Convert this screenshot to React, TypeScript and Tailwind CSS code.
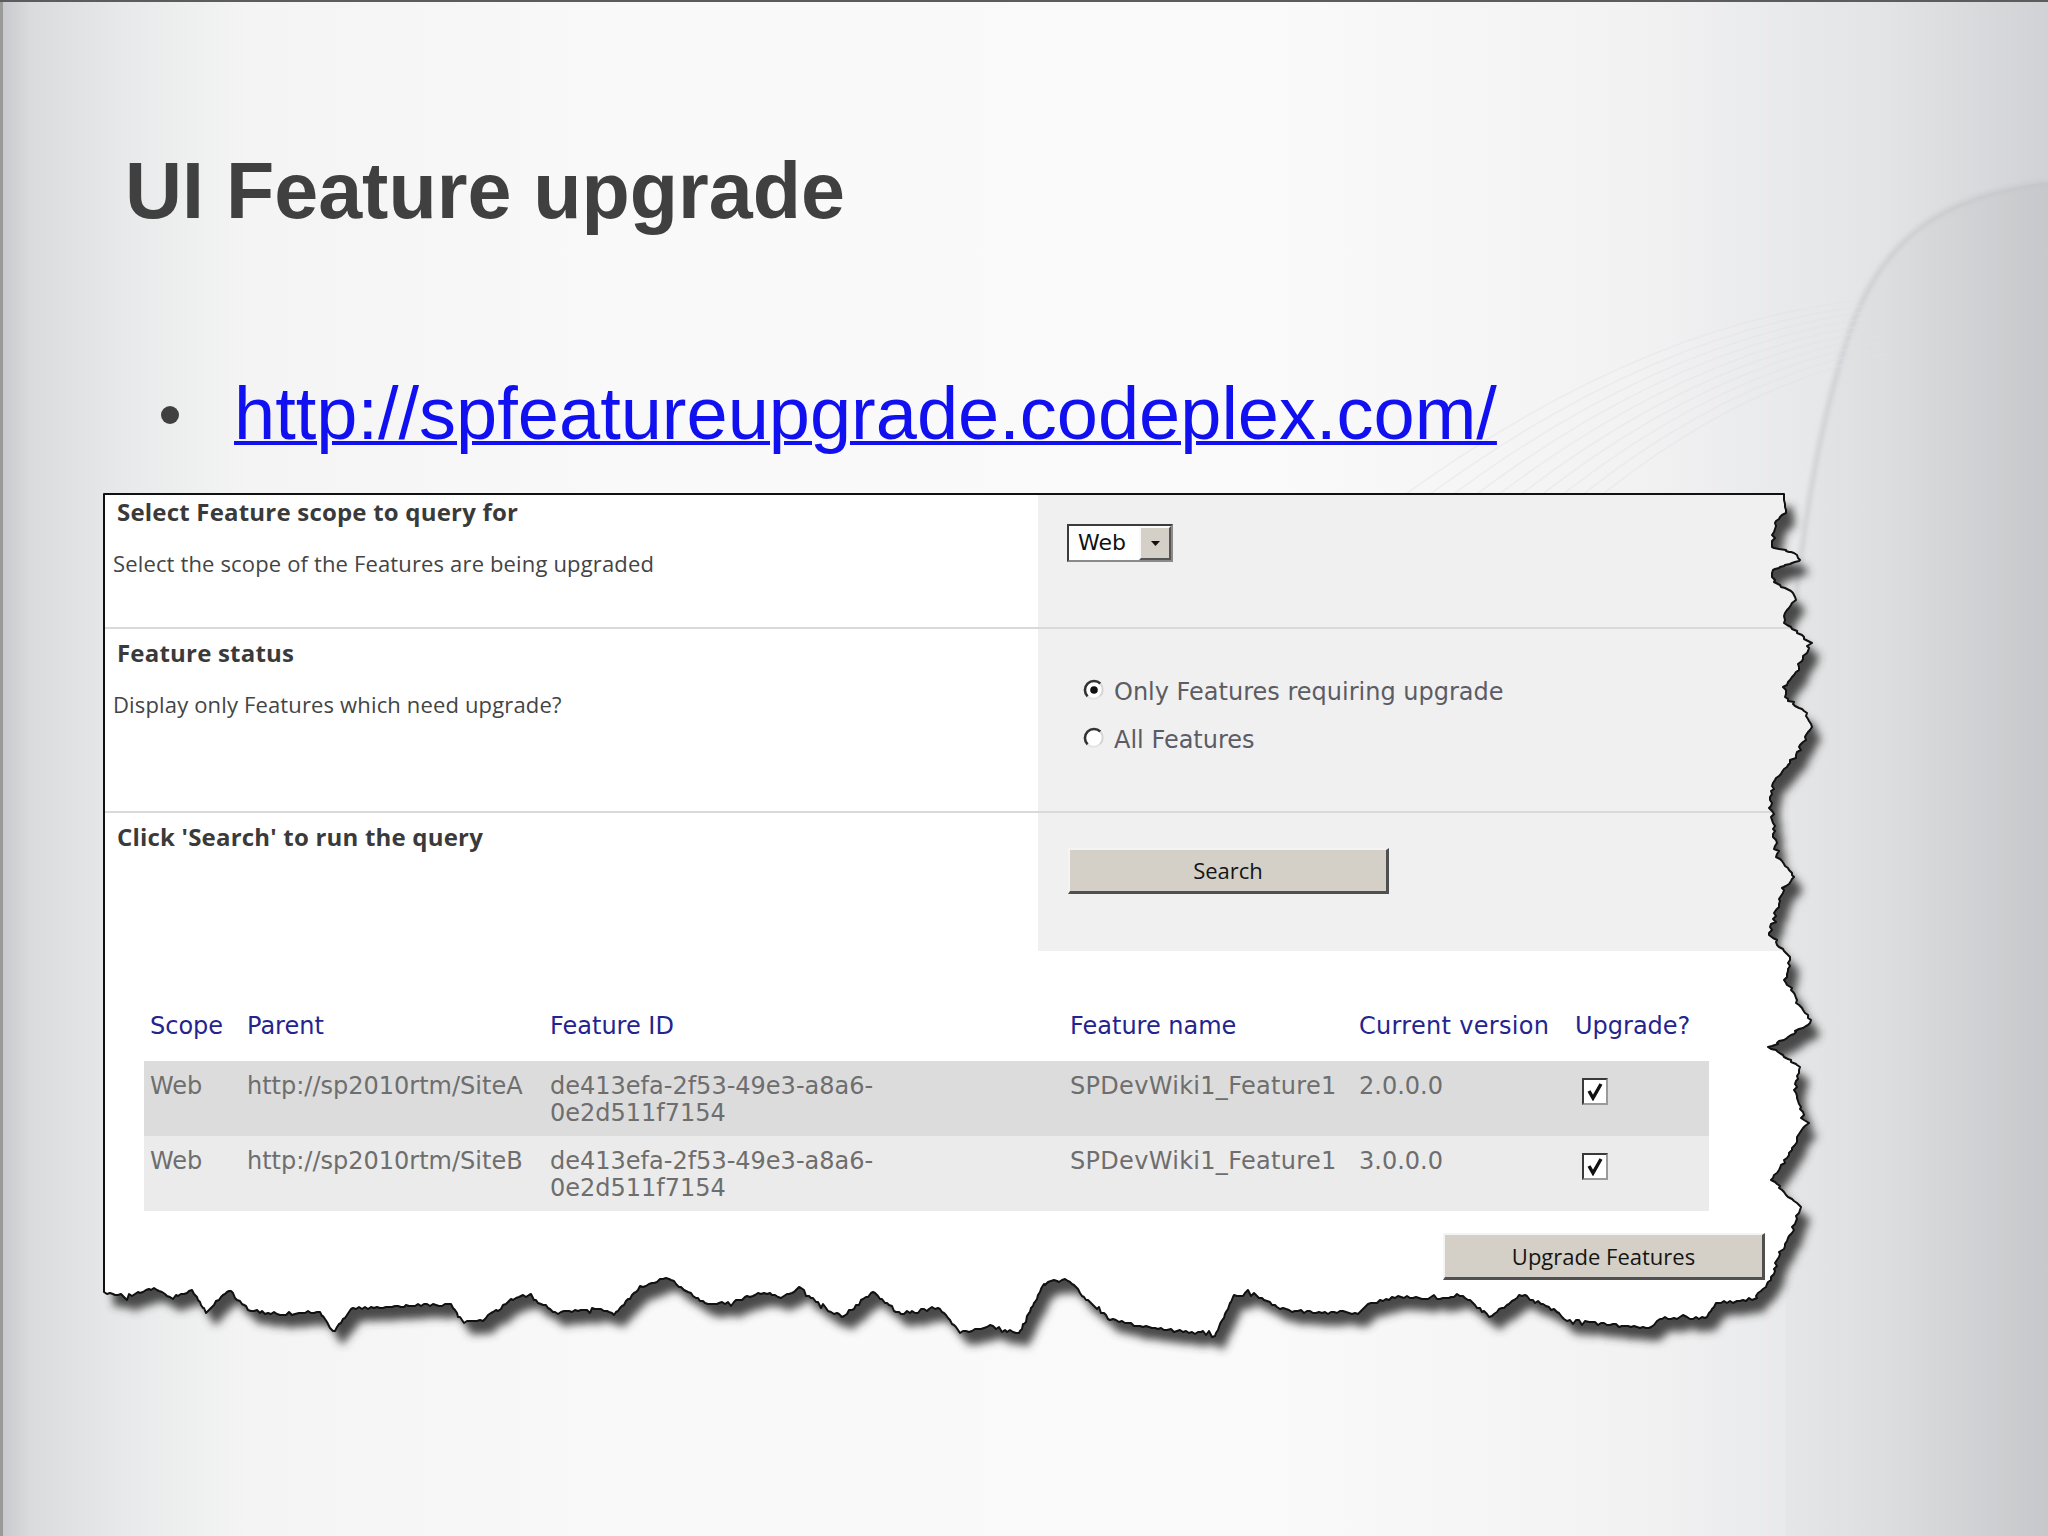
import React from "react";

const OX = 104;
const OY = 494;

const RIGHT: [number, number][] = [
  [1784, 494], [1785, 513], [1775, 523], [1772, 547], [1795, 553], [1800, 560], [1772, 570], [1772, 580],
  [1793, 593], [1795, 600], [1785, 613], [1785, 623], [1798, 633], [1811, 643], [1806, 653], [1800, 667],
  [1785, 687], [1785, 697], [1806, 713], [1811, 727], [1800, 747], [1790, 763], [1775, 780], [1770, 797],
  [1772, 817], [1775, 840], [1777, 857], [1795, 877], [1783, 890], [1777, 910], [1770, 933], [1780, 947],
  [1790, 957], [1785, 980], [1811, 1023], [1770, 1047], [1800, 1067], [1795, 1090], [1806, 1123], [1790, 1153],
  [1772, 1180], [1800, 1207], [1792, 1233], [1778, 1257], [1771, 1280], [1752, 1300],
];

const BOTTOM: [number, number][] = [
  [1718, 1302], [1705, 1318], [1665, 1318], [1646, 1328], [1607, 1325], [1567, 1320], [1554, 1310], [1522, 1295],
  [1489, 1317], [1463, 1295], [1437, 1298], [1398, 1297], [1371, 1303], [1358, 1313], [1319, 1312], [1280, 1310],
  [1254, 1293], [1234, 1295], [1215, 1335], [1189, 1332], [1149, 1328], [1110, 1320], [1084, 1297], [1068, 1280],
  [1045, 1282], [1019, 1333], [993, 1327], [960, 1332], [938, 1307], [901, 1315], [873, 1292], [842, 1317],
  [823, 1307], [799, 1287], [784, 1297], [758, 1293], [731, 1303], [705, 1303], [686, 1290], [666, 1278],
  [640, 1287], [614, 1315], [607, 1310], [575, 1310], [555, 1313], [529, 1295], [516, 1297], [483, 1320],
  [464, 1322], [451, 1305], [418, 1305], [392, 1307], [353, 1308], [333, 1332], [320, 1312], [274, 1315],
  [248, 1310], [229, 1290], [206, 1312], [192, 1290], [170, 1297], [154, 1288], [124, 1298], [104, 1292],
];

function mulberry32(seed: number) {
  let a = seed;
  return function () {
    a |= 0;
    a = (a + 0x6d2b79f5) | 0;
    let t = Math.imul(a ^ (a >>> 15), 1 | a);
    t = (t + Math.imul(t ^ (t >>> 7), 61 | t)) ^ t;
    return ((t ^ (t >>> 14)) >>> 0) / 4294967296;
  };
}

function buildEdge(): [number, number][] {
  const rnd = mulberry32(11);
  const pts: [number, number][] = [[0, 0]];
  const jag = (list: [number, number][], axis: "x" | "y") => {
    for (let i = 0; i < list.length - 1; i++) {
      const [x1, y1] = list[i];
      const [x2, y2] = list[i + 1];
      const len = Math.hypot(x2 - x1, y2 - y1);
      const n = Math.max(1, Math.round(len / 3));
      for (let k = 0; k < n; k++) {
        const t = k / n;
        let x = x1 + (x2 - x1) * t;
        let y = y1 + (y2 - y1) * t;
        const big = rnd() < 0.12 ? 2.2 : 1;
        const j = (rnd() - 0.5) * 3 * big;
        if (i > 0 || k > 0) {
          if (axis === "x") x += j;
          else y += j;
        }
        pts.push([Math.round(x - OX), Math.round(y - OY)]);
      }
    }
  };
  jag(RIGHT, "x");
  jag([RIGHT[RIGHT.length - 1], ...BOTTOM], "y");
  const last = BOTTOM[BOTTOM.length - 1];
  pts.push([0, last[1] - OY]);
  return pts;
}

const EDGE = buildEdge();
const CLIP = "polygon(" + EDGE.map(([x, y]) => `${x}px ${y}px`).join(", ") + ")";
const PATH = "M" + EDGE.map(([x, y]) => `${x} ${y}`).join(" L") + " Z";

function Radio({ checked }: { checked: boolean }) {
  return (
    <svg width="22" height="24" viewBox="0 0 22 24" className="shrink-0">
      <circle cx="11" cy="12" r="9" fill="#ffffff" />
      <path d="M16.9 18.1 A9 9 0 0 1 4.6 18.4" stroke="#e4e4e4" strokeWidth="2" fill="none" />
      <path d="M4.6 18.4 A9 9 0 0 1 17.4 5.6" stroke="#333333" strokeWidth="2.6" fill="none" />
      <path d="M17.4 5.6 A9 9 0 0 1 16.9 18.1" stroke="#d4d4d4" strokeWidth="2" fill="none" />
      {checked && <circle cx="11" cy="12" r="3.8" fill="#111111" />}
    </svg>
  );
}

function Checkbox() {
  return (
    <div className="w-[26px] h-[27px] bg-white border-2 border-t-[#3a3a3a] border-l-[#3a3a3a] border-b-[#9a9a9a] border-r-[#9a9a9a] flex items-center justify-center">
      <svg width="16" height="19" viewBox="0 0 16 19">
        <path d="M2 9 L6 16 L14 2" stroke="#111111" strokeWidth="3.4" fill="none" />
      </svg>
    </div>
  );
}

function WinButton({ label, w, h }: { label: string; w: string; h: string }) {
  return (
    <div
      className={`${w} ${h} bg-[#d4d0c8] border-t-2 border-l-2 border-t-[#f4f4f4] border-l-[#f4f4f4] border-b-[3px] border-r-[3px] border-b-[#505050] border-r-[#505050] flex items-center justify-center font-['Open_Sans',sans-serif] text-[22px] text-[#141414]`}
    >
      {label}
    </div>
  );
}

const ROWS = [
  { scope: "Web", parent: "http://sp2010rtm/SiteA", version: "2.0.0.0", bg: "bg-[#dcdcdc]" },
  { scope: "Web", parent: "http://sp2010rtm/SiteB", version: "3.0.0.0", bg: "bg-[#ebebeb]" },
];

export default function App() {
  return (
    <div className="relative w-[2048px] h-[1536px] overflow-hidden bg-[linear-gradient(90deg,#c6c8cb_0%,#d9dbdd_1.5%,#e8e9ea_6%,#f3f4f3_12%,#f8f9f8_30%,#fafafa_62%,#f2f2f3_80%,#e3e4e6_92%,#d0d2d5_100%)] shadow-[inset_0_2px_0_#5c5c5c,inset_3px_0_0_#9a9a9a]">
      {/* background swoosh drawing */}
      <svg className="absolute left-0 top-0" width="2048" height="1536" viewBox="0 0 2048 1536">
        <defs>
          <filter id="swBlur" x="-10%" y="-10%" width="120%" height="120%">
            <feGaussianBlur stdDeviation="2.5" />
          </filter>
          <linearGradient id="swFill" x1="0" y1="0" x2="1" y2="0">
            <stop offset="0" stopColor="#000000" stopOpacity="0.015" />
            <stop offset="1" stopColor="#000000" stopOpacity="0.05" />
          </linearGradient>
        </defs>
        <path
          d="M2048 182 C1945 195 1885 235 1852 325 C1822 410 1800 520 1786 700 L1786 1536 L2048 1536 Z"
          fill="url(#swFill)"
        />
        <path
          d="M2048 182 C1945 195 1885 235 1852 325 C1822 410 1800 520 1786 700"
          stroke="#c2c4c7"
          strokeWidth="3"
          fill="none"
          filter="url(#swBlur)"
        />
        {Array.from({ length: 10 }).map((_, i) => (
          <path
            key={i}
            d={`M${1320 + i * 14} ${560 + i * 10} Q${1600 + i * 6} ${330 + i * 8} ${1860 + i * 3} ${300 + i * 6}`}
            stroke="#e2e3e4"
            strokeWidth="1.5"
            strokeOpacity="0.45"
            fill="none"
          />
        ))}
      </svg>

      <div className="relative">
        <h1 className="pt-[151px] ml-[125px] font-['Liberation_Sans',Arial,sans-serif] text-[79px] leading-[80px] font-bold text-[#404040]">
          UI Feature upgrade
        </h1>

        <div className="flex items-start mt-[146px]">
          <div className="ml-[161px] mt-[29px] w-[18px] h-[18px] rounded-full bg-[#404040]" />
          <a
            href="#"
            className="ml-[55px] font-['Liberation_Sans',Arial,sans-serif] text-[74px] leading-[74px] text-[#1010f0] underline decoration-[4px]"
          >
            http://spfeatureupgrade.codeplex.com/
          </a>
        </div>

        {/* torn screenshot panel */}
        <div className="relative ml-[104px] mt-[43px] w-[1716px] h-[852px]">
          <svg className="absolute left-0 top-0 overflow-visible" width="1760" height="900">
            <defs>
              <filter id="tornShadow" x="-5%" y="-5%" width="110%" height="110%">
                <feGaussianBlur stdDeviation="4.5" />
              </filter>
            </defs>
            <path d={PATH} transform="translate(9 13)" fill="#3a3a3a" fillOpacity="0.92" filter="url(#tornShadow)" />
          </svg>

          <div className="relative w-full h-full bg-white" style={{ clipPath: CLIP }}>
            {/* Row 1 */}
            <div className="flex h-[133px]">
              <div className="w-[934px] pl-[13px] pt-[3px] font-['Open_Sans',sans-serif]">
                <div className="text-[24px] leading-[30px] font-bold tracking-[0.2px] text-[#3a3a3a]">Select Feature scope to query for</div>
                <div className="mt-[22px] -ml-[4px] text-[22px] leading-[28px] tracking-[0.15px] text-[#444444]">
                  Select the scope of the Features are being upgraded
                </div>
              </div>
              <div className="flex-1 bg-[#f0f0f1] pl-[29px] pt-[30px]">
                <div className="w-[106px] h-[38px] flex bg-white border-2 border-t-[#3c3c3c] border-l-[#3c3c3c] border-b-[#8a8a8a] border-r-[#8a8a8a]">
                  <div className="flex-1 pl-[9px] font-['DejaVu_Sans',sans-serif] text-[22px] leading-[34px] text-[#111111]">Web</div>
                  <div className="w-[32px] h-full bg-[#d4d0c8] border-t-2 border-l-2 border-t-[#fafafa] border-l-[#fafafa] border-b-2 border-r-2 border-b-[#555555] border-r-[#555555] flex items-center justify-center">
                    <svg width="9" height="5" viewBox="0 0 9 5">
                      <path d="M0 0 H9 L4.5 5 Z" fill="#111111" />
                    </svg>
                  </div>
                </div>
              </div>
            </div>
            <div className="h-[2px] bg-[#d9d9da]" />

            {/* Row 2 */}
            <div className="flex h-[182px]">
              <div className="w-[934px] pl-[13px] pt-[9px] font-['Open_Sans',sans-serif]">
                <div className="text-[24px] leading-[30px] font-bold tracking-[0.2px] text-[#3a3a3a]">Feature status</div>
                <div className="mt-[22px] -ml-[4px] text-[22px] leading-[28px] tracking-[0.15px] text-[#444444]">
                  Display only Features which need upgrade?
                </div>
              </div>
              <div className="flex-1 bg-[#f0f0f1] pl-[45px] pt-[49px] font-['DejaVu_Sans',sans-serif] text-[24px] leading-[28px] text-[#5c5c64]">
                <div className="flex items-start gap-[9px]">
                  <Radio checked />
                  <span>Only Features requiring upgrade</span>
                </div>
                <div className="flex items-start gap-[9px] mt-[20px]">
                  <Radio checked={false} />
                  <span>All Features</span>
                </div>
              </div>
            </div>
            <div className="h-[2px] bg-[#d9d9da]" />

            {/* Row 3 */}
            <div className="flex h-[138px]">
              <div className="w-[934px] pl-[13px] pt-[9px] font-['Open_Sans',sans-serif]">
                <div className="text-[24px] leading-[30px] font-bold tracking-[0.2px] text-[#3a3a3a]">Click 'Search' to run the query</div>
              </div>
              <div className="flex-1 bg-[#f0f0f1] pl-[30px] pt-[35px]">
                <WinButton label="Search" w="w-[321px]" h="h-[46px]" />
              </div>
            </div>

            {/* Results table */}
            <div className="pt-[29px] font-['DejaVu_Sans',sans-serif] text-[24px] leading-[27px]">
              <div className="ml-[40px] w-[1565px]">
                <div className="grid grid-cols-[97px_303px_520px_289px_216px_140px] h-[81px] pt-[33px] text-[#24248e]">
                  <div className="pl-[6px]">Scope</div>
                  <div className="pl-[6px]">Parent</div>
                  <div className="pl-[6px]">Feature ID</div>
                  <div className="pl-[6px]">Feature name</div>
                  <div className="pl-[6px] tracking-[0.3px]">Current version</div>
                  <div className="pl-[6px]">Upgrade?</div>
                </div>
                {ROWS.map((r) => (
                  <div
                    key={r.parent}
                    className={`grid grid-cols-[97px_303px_520px_289px_216px_140px] h-[75px] pt-[12px] text-[#6e6e6e] ${r.bg}`}
                  >
                    <div className="pl-[6px]">{r.scope}</div>
                    <div className="pl-[6px] whitespace-nowrap">{r.parent}</div>
                    <div className="pl-[6px]">
                      de413efa-2f53-49e3-a8a6-
                      <br />
                      0e2d511f7154
                    </div>
                    <div className="pl-[6px] whitespace-nowrap tracking-[0.3px]">SPDevWiki1_Feature1</div>
                    <div className="pl-[6px]">{r.version}</div>
                    <div className="pl-[13px] pt-[5px]">
                      <Checkbox />
                    </div>
                  </div>
                ))}
              </div>
              <div className="mt-[22px] ml-[1339px]">
                <WinButton label="Upgrade Features" w="w-[322px]" h="h-[47px]" />
              </div>
            </div>
          </div>

          <svg className="absolute left-0 top-0 overflow-visible pointer-events-none" width="1760" height="900">
            <path d={PATH} fill="none" stroke="#111111" strokeWidth="2" strokeLinejoin="round" />
          </svg>
        </div>
      </div>
    </div>
  );
}
